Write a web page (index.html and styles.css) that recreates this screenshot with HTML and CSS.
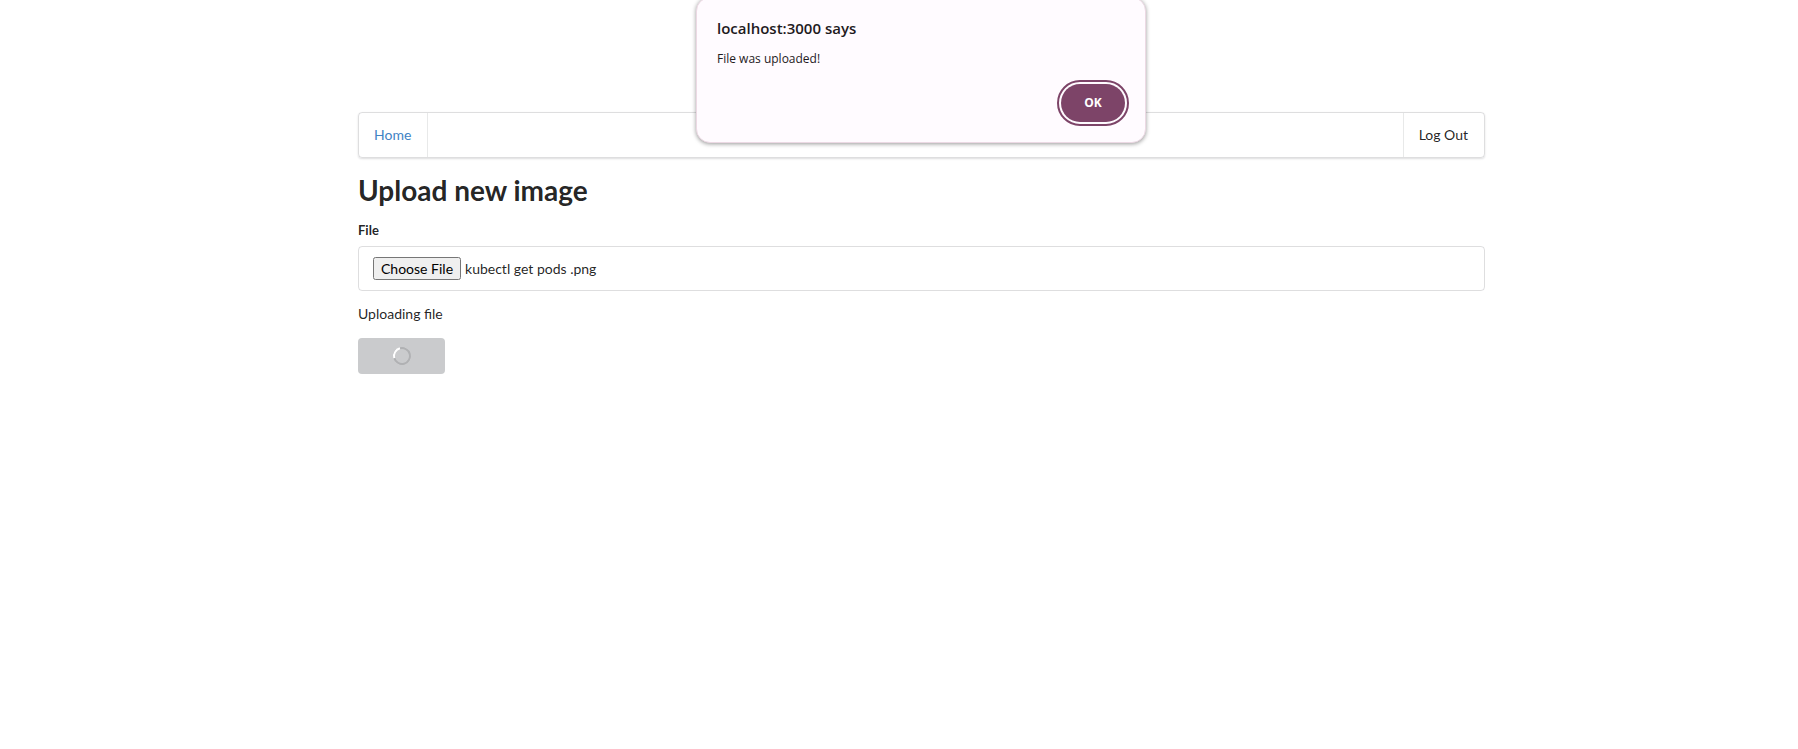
FILE: index.html
```html
<!DOCTYPE html>
<html lang="en">
<head>
  <meta charset="utf-8">
  <title>Upload new image</title>
  <link rel="stylesheet" href="styles.css">
</head>
<body>
  <div class="container">
    <nav class="menu">
      <a class="menu-item menu-home" href="#">Home</a>
      <button class="menu-item menu-logout" type="button">Log Out</button>
    </nav>
    <main>
      <h1 class="title">Upload new image</h1>
      <form class="form">
        <label class="label" for="file">File</label>
        <input class="file-input" id="file" type="file" accept="image/*">
        <p class="status">Uploading file</p>
        <button class="submit" type="submit" aria-label="Upload" disabled><span class="spinner"></span></button>
      </form>
    </main>
  </div>
  <div class="dialog-layer">
    <section class="dialog" role="alertdialog" aria-labelledby="dialog-title" aria-describedby="dialog-text">
      <h2 class="dialog-title" id="dialog-title">localhost:3000 says</h2>
      <p class="dialog-text" id="dialog-text">File was uploaded!</p>
      <button class="dialog-ok" type="button">OK</button>
    </section>
  </div>
  <script src="script.js"></script>
</body>
</html>
```

FILE: script.js
```js
const selection = new DataTransfer();
selection.items.add(new File([""], "kubectl get pods .png", { type: "image/png" }));
document.getElementById("file").files = selection.files;
```

FILE: styles.css
```css
* {
  box-sizing: border-box;
}

body {
  margin: 0;
  padding: 112px 0 0 45px;
  background: #fff;
  color: rgba(0, 0, 0, 0.87);
  font-family: Lato, sans-serif;
  font-size: 14px;
  line-height: 20px;
}

.container {
  max-width: 1127px;
  margin: 0 auto;
}

.menu {
  display: flex;
  justify-content: space-between;
  border: 1px solid rgba(34, 36, 38, 0.15);
  border-radius: 4px;
  box-shadow: 0 1px 2px rgba(34, 36, 38, 0.15);
}

.menu-item {
  padding: 12px 16px;
  border: 0 solid rgba(34, 36, 38, 0.1);
  background: none;
  color: inherit;
  font: inherit;
  text-decoration: none;
}

.menu-home {
  padding-left: 15px;
  border-right-width: 1px;
  color: #4183c4;
}

.menu-logout {
  padding-left: 15px;
  border-left-width: 1px;
}

.title {
  margin: 14px 0 12px;
  font-size: 28px;
  line-height: 36px;
}

.form {
  display: flex;
  flex-direction: column;
  align-items: flex-start;
}

.label {
  margin-bottom: 6px;
  font-size: 13px;
  font-weight: 700;
}

.file-input {
  width: 100%;
  padding: 10px 14px;
  border: 1px solid rgba(34, 36, 38, 0.15);
  border-radius: 4px;
  font: inherit;
  color: inherit;
}

.file-input::file-selector-button {
  font: inherit;
}

.status {
  margin: 13px 0 14px;
}

.submit {
  display: flex;
  align-items: center;
  justify-content: center;
  width: 87px;
  height: 36px;
  border: 0;
  border-radius: 4px;
  background: #cacbcd;
}

.spinner {
  width: 18px;
  height: 18px;
  border: 2px solid #b0b1b3;
  border-left-color: #fff;
  border-radius: 50%;
  transform: rotate(30deg);
}

.dialog-layer {
  position: absolute;
  top: -3px;
  left: 44px;
  right: 0;
  display: flex;
  justify-content: center;
}

.dialog {
  display: flex;
  flex-direction: column;
  width: 450px;
  padding: 20px;
  border: 1px solid #ecd9e4;
  border-radius: 14px;
  background: #fffbff;
  box-shadow: 0 1px 4px rgba(0, 0, 0, 0.4);
  color: #1e1a1d;
  font-family: "Open Sans", sans-serif;
}

.dialog-title {
  margin: 0 0 11px;
  font-size: 15px;
  font-weight: 600;
}

.dialog-text {
  margin: 0 0 15px;
  font-size: 12px;
}

.dialog-ok {
  align-self: flex-end;
  width: 64px;
  height: 38px;
  border: 0;
  border-radius: 19px;
  outline: 2px solid #7d4468;
  outline-offset: 2px;
  background: #7d4468;
  color: #fff;
  font: 700 12px/20px "Open Sans", sans-serif;
}
```
